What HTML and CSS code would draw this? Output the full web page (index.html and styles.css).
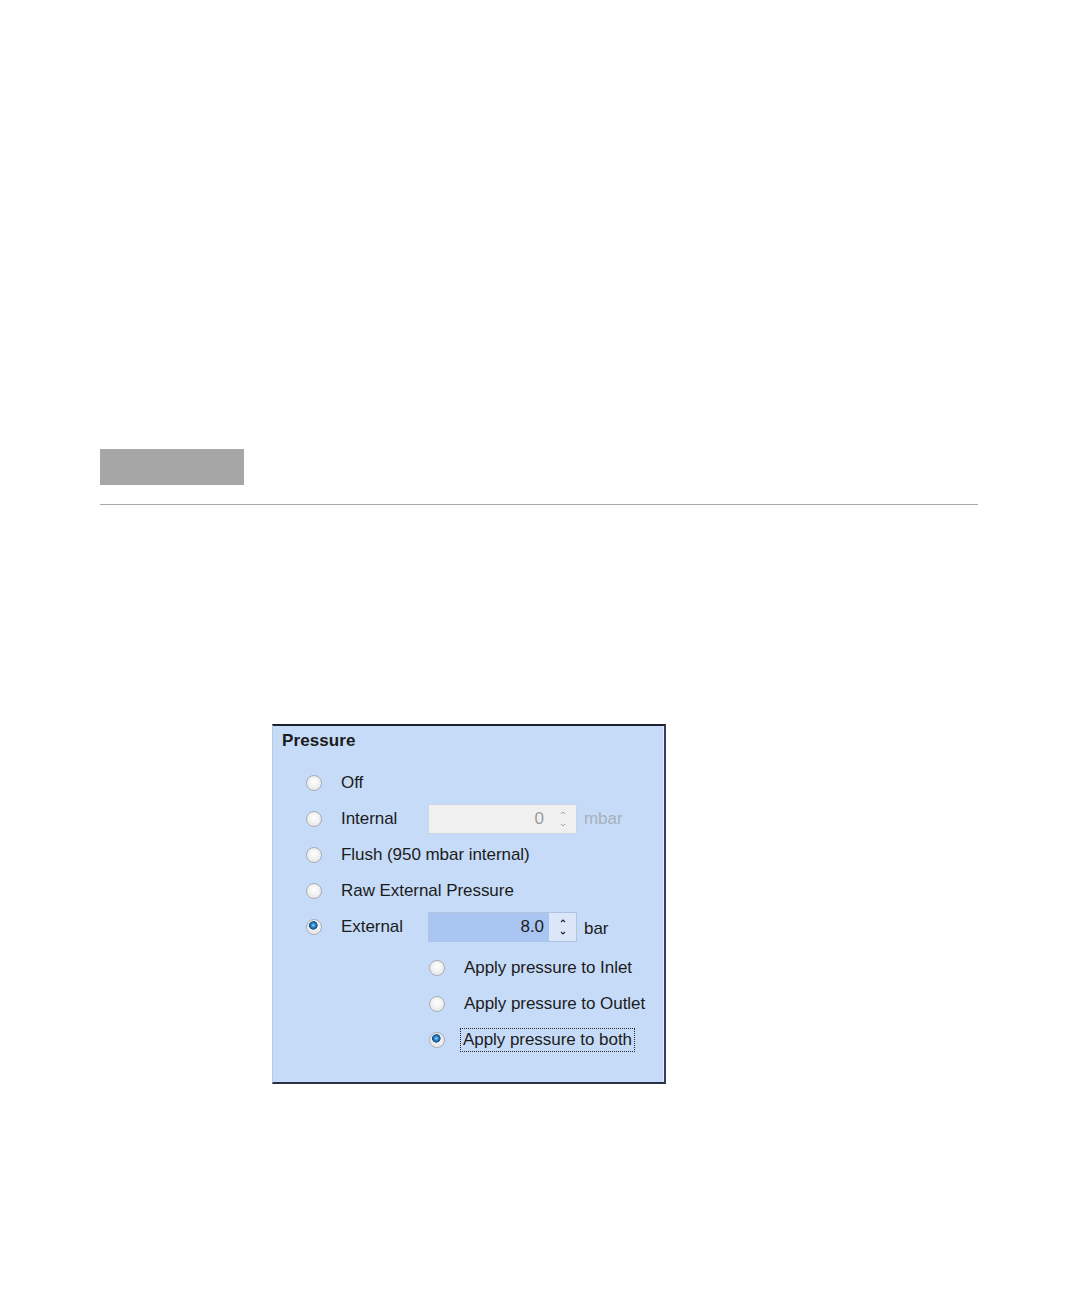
FILE: index.html
```html
<!DOCTYPE html>
<html>
<head>
<meta charset="utf-8">
<link rel="stylesheet" href="styles.css">
</head>
<body>
<div class="page">
  <div class="tab-block"></div>
  <div class="rule"></div>
  <div class="panel">
    <div class="panel-title">Pressure</div>
    <div class="rows">
      <div class="row">
        <span class="radio"></span><span class="label">Off</span>
      </div>
      <div class="row">
        <span class="radio"></span><span class="label lbl-w">Internal</span>
        <div class="spin disabled">
          <span class="spin-val">0</span>
          <span class="spin-btns">
            <svg width="8" height="20" viewBox="0 0 8 20"><path d="M2 5 L4 3 L6 5" fill="none" stroke="currentColor" stroke-width="1"/><path d="M2 15 L4 17 L6 15" fill="none" stroke="currentColor" stroke-width="1"/></svg>
          </span>
        </div>
        <span class="unit muted">mbar</span>
      </div>
      <div class="row">
        <span class="radio"></span><span class="label">Flush (950 mbar internal)</span>
      </div>
      <div class="row">
        <span class="radio"></span><span class="label">Raw External Pressure</span>
      </div>
      <div class="row">
        <span class="radio checked"></span><span class="label lbl-w">External</span>
        <div class="spin active">
          <span class="spin-val">8.0</span>
          <span class="spin-btns">
            <svg width="8" height="20" viewBox="0 0 8 20"><path d="M2 5 L4 3 L6 5" fill="none" stroke="currentColor" stroke-width="1.2"/><path d="M2 15 L4 17 L6 15" fill="none" stroke="currentColor" stroke-width="1.2"/></svg>
          </span>
        </div>
        <span class="unit">bar</span>
      </div>
    </div>
    <div class="subrows">
      <div class="row">
        <span class="radio"></span><span class="label">Apply pressure to Inlet</span>
      </div>
      <div class="row">
        <span class="radio"></span><span class="label">Apply pressure to Outlet</span>
      </div>
      <div class="row">
        <span class="radio checked"></span><span class="label focus">Apply pressure to both</span>
      </div>
    </div>
  </div>
</div>
</body>
</html>
```

FILE: styles.css
```css
html, body {
  margin: 0;
  padding: 0;
  background: #ffffff;
}
.page {
  width: 1080px;
  height: 1296px;
  padding-top: 449px;
  box-sizing: border-box;
  font-family: "Liberation Sans", Arial, sans-serif;
}
.tab-block {
  width: 144px;
  height: 36px;
  margin-left: 100px;
  background: #a6a6a6;
}
.rule {
  margin: 19px 0 0 100px;
  width: 878px;
  height: 1px;
  background: #a9a9a9;
}
.panel {
  margin: 219px 0 0 272px;
  width: 394px;
  height: 360px;
  box-sizing: border-box;
  background: #c6dbf7;
  border-top: 2px solid #1e2230;
  border-bottom: 2px solid #2a3048;
  border-right: 2px solid #3a4058;
  border-left: 1px solid #b7cbe6;
  box-shadow: inset -1px 0 0 #e4ecf8;
  padding: 5px 0 0 9px;
  color: #1c1c1c;
}
.panel-title {
  font-weight: bold;
  font-size: 17px;
  letter-spacing: 0.1px;
  height: 20px;
  line-height: 20px;
  margin-bottom: 14px;
}
.rows {
  display: flex;
  flex-direction: column;
  padding-left: 24px;
}
.row {
  display: flex;
  align-items: center;
  height: 36px;
}
.radio {
  width: 16px;
  height: 16px;
  border-radius: 50%;
  box-sizing: border-box;
  border: 1px solid #a8acb2;
  background: radial-gradient(circle at 50% 40%, #ffffff 0%, #f2f2f2 45%, #d6d8da 100%);
  box-shadow: inset 0 0 0 1px #eceef0;
  flex: none;
}
.radio.checked {
  background:
    radial-gradient(circle at 45% 38%, #9fd6ff 0px, #2f86c6 2px, #0f4f86 4px, transparent 4.6px),
    radial-gradient(circle at 50% 40%, #ffffff 0%, #f0f0f0 45%, #d2d4d8 100%);
}
.label {
  font-size: 17px;
  letter-spacing: -0.05px;
  margin-left: 19px;
  line-height: 20px;
  white-space: nowrap;
}
.lbl-w {
  width: 85px;
}
.spin {
  display: flex;
  width: 149px;
  height: 30px;
  box-sizing: border-box;
  margin-left: 2px;
}
.spin.disabled {
  background: #f0f0f0;
  border: 1px solid #cdd6e2;
  color: #9a9a9a;
}
.spin.active {
  border: 1px solid #b0c4e2;
  background: #a9c5f1;
  color: #1c1c1c;
}
.spin-val {
  flex: 1;
  text-align: right;
  font-size: 17px;
  letter-spacing: -0.05px;
  line-height: 28px;
  padding-right: 5px;
}
.spin-btns {
  width: 27px;
  display: flex;
  align-items: center;
  justify-content: center;
  color: #8a8a8a;
}
.spin.active .spin-btns {
  background: #dbe7f8;
  color: #2a2a2a;
}
.spin.disabled .spin-btns {
  color: #a4a4a4;
}
.unit {
  font-size: 17px;
  letter-spacing: -0.05px;
  margin-left: 7px;
  margin-top: 4px;
}
.unit.muted {
  color: #a8b0ba;
  margin-top: 0;
}
.subrows {
  display: flex;
  flex-direction: column;
  padding-left: 147px;
  margin-top: 5px;
}
.label.focus {
  outline: 1px dotted #2a2a2a;
  outline-offset: 1px;
  padding: 0 1px;
}
.subrows .label {
  margin-left: 19px;
}
.subrows .label.focus {
  margin-left: 17px;
}
```
